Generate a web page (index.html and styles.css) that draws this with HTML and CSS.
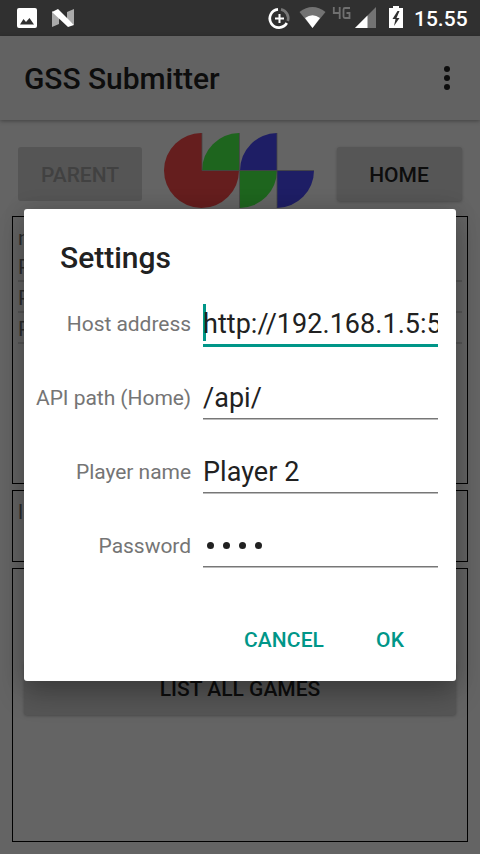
FILE: index.html
```html
<!DOCTYPE html>
<html lang="en">
<head>
<meta charset="utf-8">
<title>GSS Submitter</title>
<link rel="stylesheet" href="styles.css">
</head>
<body>
<div class="screen">
  <header class="status">
    <svg class="notifications" width="80" height="36" viewBox="0 0 80 36">
      <path fill="#fff" fill-rule="evenodd" d="M19 8h16a2 2 0 0 1 2 2v16a2 2 0 0 1-2 2H19a2 2 0 0 1-2-2V10a2 2 0 0 1 2-2zM20 24.500h14l-4.500-6.500-3.500 4-2.500-3z"/>
      <path fill="#aaa" d="M52 11l7 6v7l-7 3zM67 12l7-3v16l-7-6z"/>
      <path fill="#fff" d="M52 12l6-3 16 16-6 2z"/>
    </svg>
    <svg class="system" width="140" height="36" viewBox="268 0 140 36">
      <g fill="none" stroke-width="2.700">
        <path stroke="#fff" d="M278 9.400A9.100 9.100 0 1 0 286.800 23"/>
        <path stroke="#777" d="M281 9.400A9.100 9.100 0 0 1 287.800 21"/>
        <path stroke="#fff" stroke-width="2" d="M279.500 14v9M275 18.500h9"/>
      </g>
      <path fill="#737373" d="M299.500 12Q312.500 2 325.500 12L312.500 28z"/>
      <path fill="#fff" d="M305 18Q312.500 12.500 320 18L312.500 28z"/>
      <path fill="none" stroke="#707070" stroke-width="1.800" d="M333.800 7v6h6.500M339.700 7v12M350 8h-5q-1.500 0-1.500 1.500v7q0 1.500 1.500 1.500H349.500v-5h-3"/>
      <path fill="#737373" d="M376 7v21h-21z"/>
      <path fill="#fff" d="M367.500 15.500V28H355z"/>
      <path fill="#fff" d="M389 8h4V6h6v2h4v20h-14z"/>
      <path fill="#303030" d="M397.500 11l-5 8h3l-1.500 7 5.500-8h-3l3-7z"/>
    </svg>
    <span class="clock">15.55</span>
  </header>
  <div class="appbar">
    <h1>GSS Submitter</h1>
    <svg width="8" height="26" viewBox="0 0 8 26"><circle cx="4" cy="4" r="3"/><circle cx="4" cy="13" r="3"/><circle cx="4" cy="22" r="3"/></svg>
  </div>
  <main>
    <div class="nav">
      <button class="btn disabled">PARENT</button>
      <svg class="logo" width="150" height="75" viewBox="0 0 150 75">
        <path fill="#651e1e" d="M38 0A37.500 37.500 0 1 0 75 37.500H38z"/>
        <path fill="#1e651e" d="M38 37.500A37.500 37.500 0 0 1 75 0V37.500zM76 37.500h37A37.500 37.500 0 0 1 76 75z"/>
        <path fill="#1e1e65" d="M76 37.500A37.500 37.500 0 0 1 113 0V37.500zM113 37.500H150A37.500 37.500 0 0 1 113 75z"/>
        <path fill="none" stroke="#444" stroke-width=".8" d="M38 0V37.500H150M75.500 0V75M113 0V75"/>
      </svg>
      <button class="btn home">HOME</button>
    </div>
    <section class="panel list">
      <p>n</p>
      <p class="row">P</p>
      <p class="row">P</p>
      <p class="row">P</p>
    </section>
    <section class="panel detail"><p>l</p></section>
    <section class="panel games"><button class="btn all">LIST ALL GAMES</button></section>
  </main>
  <div class="dialog">
    <h2>Settings</h2>
    <div class="form">
      <label>Host address</label><div class="field focused"><span>http://192.168.1.5:5</span></div>
      <label>API path (Home)</label><div class="field"><span>/api/</span></div>
      <label>Player name</label><div class="field"><span>Player 2</span></div>
      <label>Password</label><div class="field dots"><i></i><i></i><i></i><i></i></div>
    </div>
    <div class="actions"><button>CANCEL</button><button>OK</button></div>
  </div>
</div>
</body>
</html>
```
FILE: styles.css
```css
* { box-sizing: border-box; margin: 0; }
body { font-family: Roboto, sans-serif; background: #646464; }
button { font: 500 21px/24px Roboto, sans-serif; border: 0; padding: 0; background: none; white-space: nowrap; }
svg { display: block; flex: none; }
.screen { position: relative; display: flex; flex-direction: column; width: 480px; height: 854px; overflow: hidden; }
.status { display: flex; justify-content: space-between; height: 36px; background: #303030; }
.system { margin-left: 188px; }
.clock { flex: 1; padding-left: 6px; color: #fff; font-size: 21px; font-weight: 500; line-height: 38px; }
.appbar { display: flex; align-items: center; justify-content: space-between; height: 84px; padding: 0 29px 0 24px; background: #626262; box-shadow: 0 1px 4px rgba(0, 0, 0, .35); }
.appbar h1 { font-size: 30px; font-weight: 500; letter-spacing: -.06px; color: #0d0d0d; }
.appbar svg { fill: #0d0d0d; }
main { display: flex; flex: 1; flex-direction: column; gap: 6px; padding: 12px 12px; }
.nav { display: flex; align-items: flex-start; justify-content: space-between; height: 78px; padding: 0 6px; }
.btn { height: 54px; border-radius: 3px; background: #565656; color: #0d0d0d; box-shadow: 0 1px 3px rgba(0, 0, 0, .25); }
.nav .btn { width: 124px; margin-top: 15px; padding-top: 2px; }
.nav .disabled { background: #555; color: #414141; box-shadow: none; }
.nav .home { width: 125px; padding-right: 1px; }
.logo { margin: 1px 0 0 -1px; }
.panel { border: 1px solid #000; }
.panel p { height: 31px; padding-left: 5px; color: #2d2d2d; font-size: 21px; line-height: 28px; }
.list { height: 268px; padding-top: 5px; }
.list .row { margin-right: 5px; margin-left: 5px; padding-left: 0; border-bottom: 2px solid #555; line-height: 32px; }
.list p:first-child { height: 29px; line-height: 32px; }
.detail { height: 72px; padding-top: 7px; }
.games { height: 274px; padding: 92px 11px 0; }
.all { width: 100%; padding-top: 2px; }
.dialog { position: absolute; top: 209px; left: 24px; width: 432px; height: 472px; padding: 31px 18px 0 12px; border-radius: 3px; background: #fff; box-shadow: 0 14px 28px rgba(0, 0, 0, .24), 0 0 22px rgba(0, 0, 0, .14); }
.dialog h2 { padding-left: 24px; color: #212121; font-size: 30px; font-weight: 500; line-height: 36px; }
.form { display: grid; grid-template-columns: 155px 235px; gap: 18px 12px; margin-top: 13px; }
.form label { height: 56px; color: #757575; font-size: 21px; line-height: 71px; letter-spacing: -.04px; text-align: right; white-space: nowrap; }
.field { display: flex; height: 56px; padding-top: 15px; border-bottom: 1px solid #777; box-shadow: 0 1px #bbb; color: #212121; font-size: 27px; line-height: 40px; letter-spacing: .04px; white-space: nowrap; overflow: hidden; }
.focused { position: relative; height: 58px; margin-bottom: -2px; border-bottom: 3px solid #009688; box-shadow: none; }
.focused::before { content: ""; position: absolute; top: 15px; left: 0; width: 3px; height: 37px; background: #009688; }
.focused span { position: relative; }
.dots { align-items: center; gap: 9px; padding: 13px 0 0 4px; }
.dots i { width: 7px; height: 7px; border-radius: 50%; background: #212121; }
.actions { display: flex; justify-content: flex-end; gap: 52px; margin-top: 61px; padding-right: 34px; }
.actions button { color: #009688; letter-spacing: .1px; }
```
